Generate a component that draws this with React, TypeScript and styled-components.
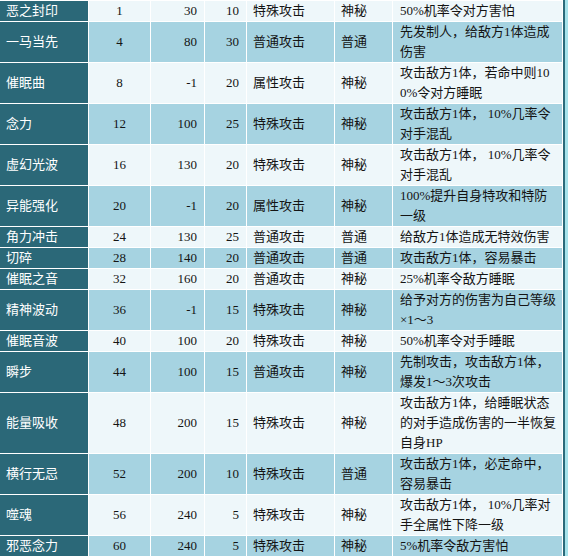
import React from "react"
import styled, { createGlobalStyle } from "styled-components"

const GlobalStyle = createGlobalStyle`
    html, body {
        margin: 0;
        padding: 0;
        background: #a6e2ea;
        overflow: hidden;
    }
`

const Frame = styled.div`
    width: 563px;
    height: 556px;
    overflow: hidden;
    border-right: 2px solid #2b6a7a;
`

const Table = styled.table`
    margin-left: -1px;
    border-collapse: separate;
    border-spacing: 1px;
    background: #ffffff;
    table-layout: fixed;
    width: 564px;
    font-family: "Liberation Serif", "Noto Sans CJK SC", serif;
    font-size: 13px;
    line-height: 20px;
    color: #141414;
`

const Row = styled.tr<{ $shade: boolean }>`
    background: ${(p) => (p.$shade ? "#a6d3e1" : "#eef7fa")};
`

const NameCell = styled.td`
    width: 88px;
    background: #2b6878;
    color: #ffffff;
    padding: 0 0 0 6px;
    box-sizing: border-box;
    vertical-align: middle;
    white-space: nowrap;
`

const Cell = styled.td<{ $w: number; $align?: "left" | "center" | "right" }>`
    width: ${(p) => p.$w}px;
    box-sizing: border-box;
    padding: 0 ${(p) => (p.$align === "right" ? "7px" : "0")} 0
        ${(p) => (p.$align === "left" || !p.$align ? "6px" : "0")};
    text-align: ${(p) => p.$align || "left"};
    vertical-align: middle;
    white-space: nowrap;
`

const Desc = styled.td`
    width: 169px;
    box-sizing: border-box;
    padding: 0 0 0 7px;
    vertical-align: middle;
    white-space: pre;
`

interface Skill {
    name: string
    level: number
    power: number
    pp: number
    kind: string
    attr: string
    desc: string
}

const skills: Skill[] = [
    { name: "恶之封印", level: 1, power: 30, pp: 10, kind: "特殊攻击", attr: "神秘", desc: "50%机率令对方害怕" },
    { name: "一马当先", level: 4, power: 80, pp: 30, kind: "普通攻击", attr: "普通", desc: "先发制人，给敌方1体造成\n伤害" },
    { name: "催眠曲", level: 8, power: -1, pp: 20, kind: "属性攻击", attr: "神秘", desc: "攻击敌方1体，若命中则10\n0%令对方睡眠" },
    { name: "念力", level: 12, power: 100, pp: 25, kind: "特殊攻击", attr: "神秘", desc: "攻击敌方1体， 10%几率令\n对手混乱" },
    { name: "虚幻光波", level: 16, power: 130, pp: 20, kind: "特殊攻击", attr: "神秘", desc: "攻击敌方1体， 10%几率令\n对手混乱" },
    { name: "异能强化", level: 20, power: -1, pp: 20, kind: "属性攻击", attr: "神秘", desc: "100%提升自身特攻和特防\n一级" },
    { name: "角力冲击", level: 24, power: 130, pp: 25, kind: "普通攻击", attr: "普通", desc: "给敌方1体造成无特效伤害" },
    { name: "切碎", level: 28, power: 140, pp: 20, kind: "普通攻击", attr: "普通", desc: "攻击敌方1体，容易暴击" },
    { name: "催眠之音", level: 32, power: 160, pp: 20, kind: "普通攻击", attr: "神秘", desc: "25%机率令敌方睡眠" },
    { name: "精神波动", level: 36, power: -1, pp: 15, kind: "特殊攻击", attr: "神秘", desc: "给予对方的伤害为自己等级\n×1～3" },
    { name: "催眠音波", level: 40, power: 100, pp: 20, kind: "特殊攻击", attr: "神秘", desc: "50%机率令对手睡眠" },
    { name: "瞬步", level: 44, power: 100, pp: 15, kind: "普通攻击", attr: "神秘", desc: "先制攻击，攻击敌方1体，\n爆发1～3次攻击" },
    { name: "能量吸收", level: 48, power: 200, pp: 15, kind: "特殊攻击", attr: "神秘", desc: "攻击敌方1体，给睡眠状态\n的对手造成伤害的一半恢复\n自身HP" },
    { name: "横行无忌", level: 52, power: 200, pp: 10, kind: "特殊攻击", attr: "普通", desc: "攻击敌方1体，必定命中，\n容易暴击" },
    { name: "噬魂", level: 56, power: 240, pp: 5, kind: "特殊攻击", attr: "神秘", desc: "攻击敌方1体， 10%几率对\n手全属性下降一级" },
    { name: "邪恶念力", level: 60, power: 240, pp: 5, kind: "特殊攻击", attr: "神秘", desc: "5%机率令敌方害怕" },
]

const App = () => {
    return (
        <>
            <GlobalStyle />
            <Frame>
                <Table>
                    <tbody>
                        {skills.map((s, i) => (
                            <Row key={s.name} $shade={i % 2 === 1}>
                                <NameCell>{s.name}</NameCell>
                                <Cell $w={61} $align="center">{s.level}</Cell>
                                <Cell $w={53} $align="right">{s.power}</Cell>
                                <Cell $w={41} $align="right">{s.pp}</Cell>
                                <Cell $w={87}>{s.kind}</Cell>
                                <Cell $w={57}>{s.attr}</Cell>
                                <Desc>{s.desc}</Desc>
                            </Row>
                        ))}
                    </tbody>
                </Table>
            </Frame>
        </>
    )
}

export default App
